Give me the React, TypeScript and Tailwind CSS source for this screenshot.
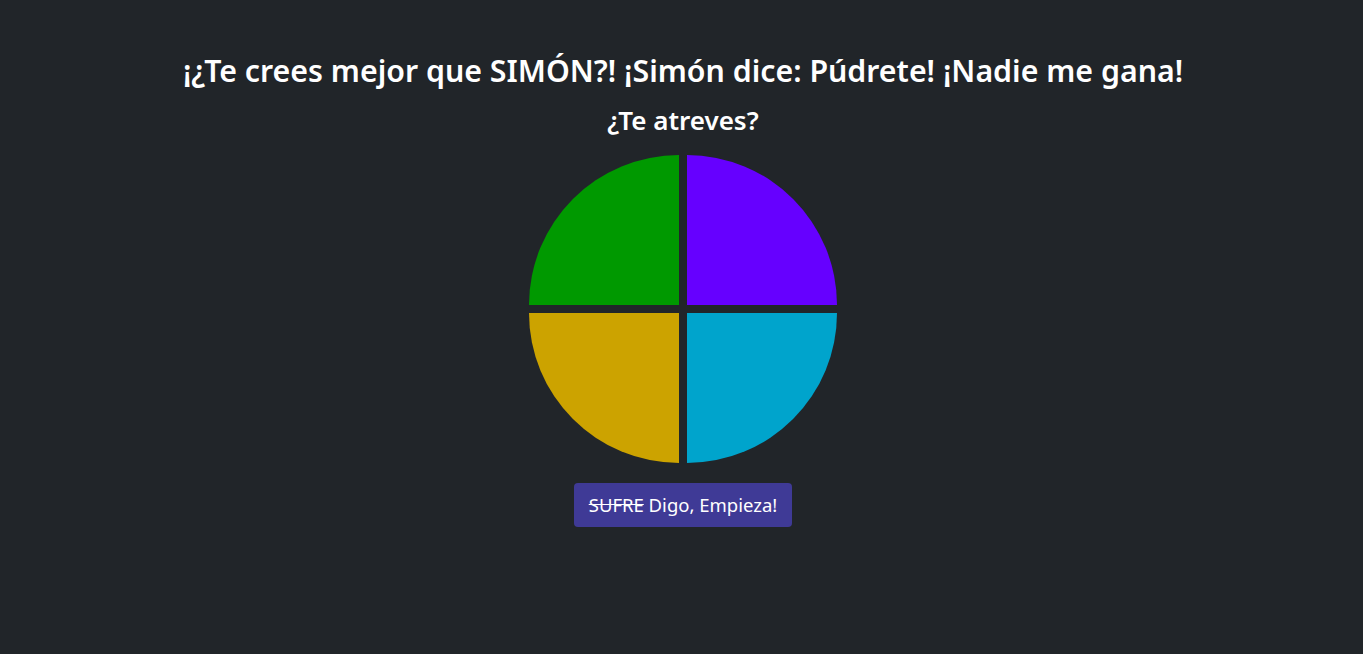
import React from "react";

const font = { fontFamily: '"Noto Sans", "Open Sans", sans-serif' };

const App = () => {
  return (
    <div
      className="min-h-screen w-full bg-[#212529] text-white flex flex-col items-center pt-[53px] pl-[3px]"
      style={font}
    >
      <h3 className="text-[30.3px] leading-[36px] font-semibold">
        ¡¿Te crees mejor que SIMÓN?! ¡Simón dice: Púdrete! ¡Nadie me gana!
      </h3>
      <h4 className="mt-4 text-[26px] leading-[30px] font-semibold">¿Te atreves?</h4>
      <div className="mt-5 grid grid-cols-2 gap-2 w-[308px]">
        <div className="h-[150px] bg-[#009900] rounded-tl-[150px]" />
        <div className="h-[150px] bg-[#6600ff] rounded-tr-[150px]" />
        <div className="h-[150px] bg-[#cca300] rounded-bl-[150px]" />
        <div className="h-[150px] bg-[#00a4cc] rounded-br-[150px]" />
      </div>
      <button className="mt-5 h-[44px] px-[15px] rounded bg-[#3f3a96] text-white text-[18.5px] leading-none">
        <s>SUFRE</s> Digo, Empieza!
      </button>
    </div>
  );
};

export default App;
